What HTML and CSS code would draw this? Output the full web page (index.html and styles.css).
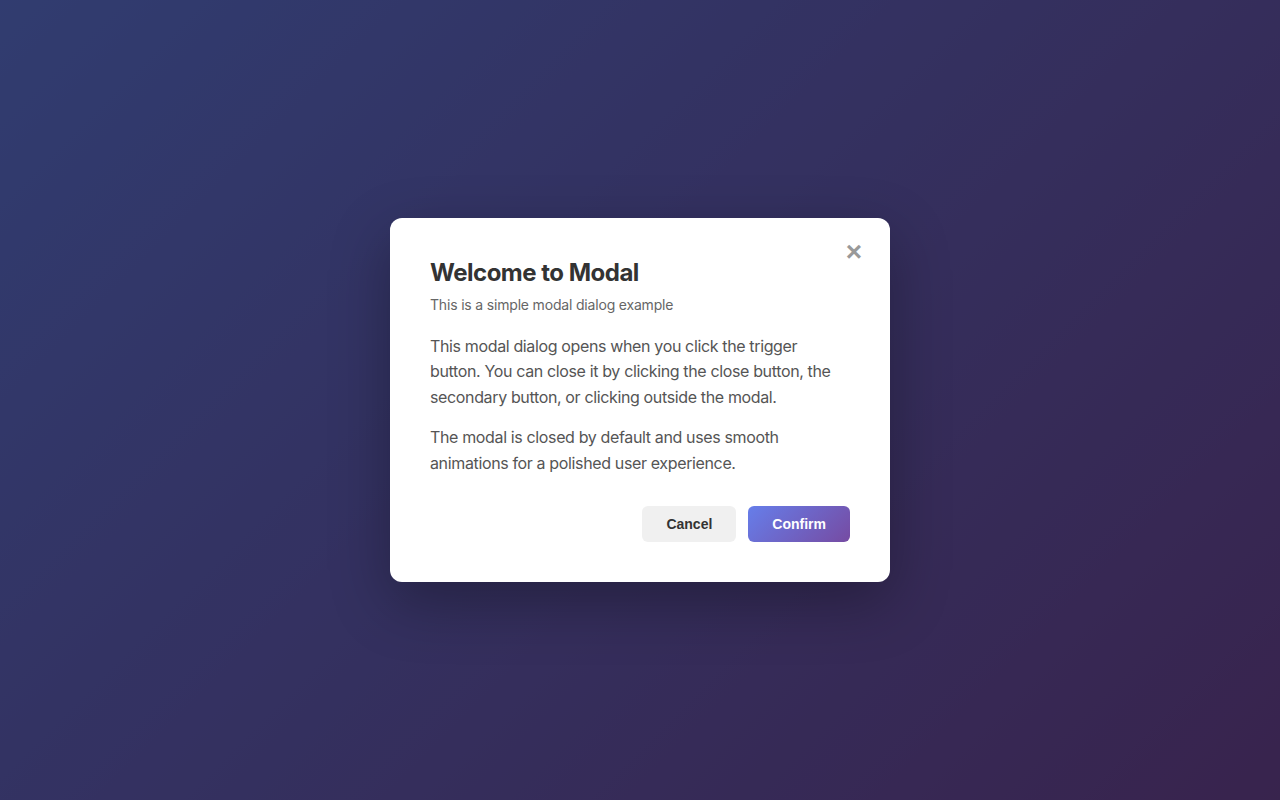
FILE: index.html
```html
<!DOCTYPE html>
<html lang="en">
<head>
<meta charset="utf-8">
<title>Modal</title>
<link rel="stylesheet" href="styles.css">
</head>
<body>
<div class="backdrop">
  <div class="overlay">
    <div class="modal" role="dialog" aria-labelledby="modal-title">
      <button class="close" aria-label="Close">&times;</button>
      <h2 class="title" id="modal-title">Welcome to Modal</h2>
      <p class="subtitle">This is a simple modal dialog example</p>
      <div class="body">
        <p>This modal dialog opens when you click the trigger button. You can close it by clicking the close button, the secondary button, or clicking outside the modal.</p>
        <p>The modal is closed by default and uses smooth animations for a polished user experience.</p>
      </div>
      <div class="actions">
        <button class="btn btn-secondary">Cancel</button>
        <button class="btn btn-primary">Confirm</button>
      </div>
    </div>
  </div>
</div>
</body>
</html>
```
FILE: styles.css
```css
* { box-sizing: border-box; }
html, body { margin: 0; padding: 0; height: 100%; }
body {
  font-family: Inter, "Liberation Sans", sans-serif;
}
.backdrop {
  height: 100vh;
  background: linear-gradient(135deg, #667eea 0%, #764ba2 100%);
}
.overlay {
  height: 100%;
  background: rgba(0, 0, 0, 0.52);
  display: flex;
  align-items: center;
  justify-content: center;
}
.modal {
  position: relative;
  width: 500px;
  background: #fff;
  border-radius: 12px;
  padding: 40px;
  box-shadow: 0 20px 60px rgba(0, 0, 0, 0.3);
}
.close {
  position: absolute;
  top: 16px;
  right: 16px;
  width: 40px;
  height: 36px;
  border: none;
  background: none;
  color: #999;
  font-family: "Liberation Sans", sans-serif;
  font-size: 28px;
  font-weight: 700;
  line-height: 36px;
  padding: 0;
  cursor: pointer;
}
.title {
  margin: -1px 0 9px;
  font-size: 24px;
  font-weight: 700;
  color: #333;
  line-height: 1.3;
  letter-spacing: -0.5px;
}
.subtitle {
  margin: 0 0 20px;
  font-size: 14px;
  color: #666;
  line-height: 1.2;
  letter-spacing: -0.18px;
}
.body p {
  margin: 0 0 15px;
  font-size: 16px;
  line-height: 1.6;
  color: #555;
  letter-spacing: -0.36px;
}
.body p:last-child { margin-bottom: 0; }
.actions {
  display: flex;
  justify-content: flex-end;
  gap: 12px;
  margin-top: 30px;
}
.btn {
  height: 36px;
  padding: 0 24px;
  border: none;
  border-radius: 6px;
  font-family: "Liberation Sans", Arial, sans-serif;
  font-size: 14px;
  font-weight: 700;
  cursor: pointer;
}
.btn-secondary {
  background: #f0f0f0;
  color: #333;
}
.btn-primary {
  background: linear-gradient(135deg, #667eea 0%, #764ba2 100%);
  color: #fff;
}
```
